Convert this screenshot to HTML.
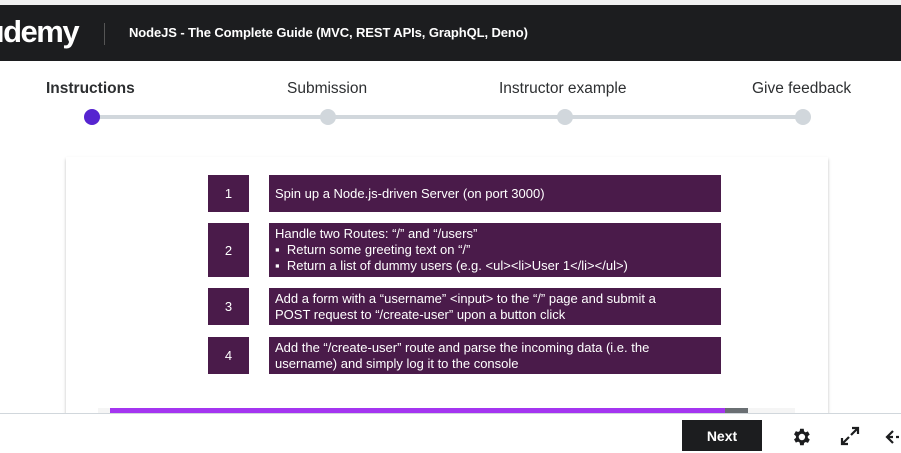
<!DOCTYPE html>
<html><head><meta charset="utf-8"><style>
*{margin:0;padding:0;box-sizing:border-box}
body{width:901px;height:451px;overflow:hidden;background:#fff;font-family:"Liberation Sans",sans-serif;position:relative}
.top{position:absolute;left:0;top:0;width:901px;height:5px;background:#f0f0f0}
.hdr{position:absolute;left:0;top:5px;width:901px;height:56px;background:#1c1d1f;color:#fff}
.logo{position:absolute;left:-4px;top:9px;font-size:31px;font-weight:bold;letter-spacing:-1.5px}
.sep{position:absolute;left:104px;top:18px;width:1px;height:22px;background:#555}
.title{position:absolute;left:129px;top:20px;font-size:13px;font-weight:bold;letter-spacing:-0.1px}
.step{position:absolute;top:80px;font-size:15.5px;color:#2d2f31}
.track{position:absolute;left:92px;top:115px;width:711px;height:4px;background:#d1d7dc}
.dot{position:absolute;top:109px;width:16px;height:16px;border-radius:50%;background:#d1d7dc}
.card{position:absolute;left:66px;top:157px;width:762px;height:260px;background:#fff;box-shadow:0 2px 3px rgba(0,0,0,.25)}
.n{position:absolute;left:208px;width:41px;background:#4a1b4a;color:#fff;font-size:13px;display:flex;align-items:center;justify-content:center}
.t{position:absolute;left:269px;width:452px;background:#4a1b4a;color:#fff;font-size:13px;line-height:16px;padding:0 6px;display:flex;flex-direction:column;justify-content:center}
.bar{position:absolute;top:408px;height:5px}
.bot{position:absolute;left:0;top:413px;width:901px;height:38px;background:#fff;border-top:1px solid #d1d7dc}
.next{position:absolute;left:682px;top:420px;width:80px;height:31px;background:#1c1d1f;color:#fff;font-weight:bold;font-size:14px;text-align:center;line-height:33px}
</style></head><body>
<div class="top"></div>
<div class="hdr"><div class="logo">ıdemy</div><div class="sep"></div><div class="title">NodeJS - The Complete Guide (MVC, REST APIs, GraphQL, Deno)</div></div>
<div class="step" style="left:46px;font-weight:bold">Instructions</div>
<div class="step" style="left:287px">Submission</div>
<div class="step" style="left:499px">Instructor example</div>
<div class="step" style="left:752px">Give feedback</div>
<div class="track"></div>
<div class="dot" style="left:84px;background:#5624d0"></div>
<div class="dot" style="left:320px"></div>
<div class="dot" style="left:557px"></div>
<div class="dot" style="left:795px"></div>
<div class="card"></div>
<div class="n" style="top:175px;height:37px">1</div>
<div class="t" style="top:175px;height:37px">Spin up a Node.js-driven Server (on port 3000)</div>
<div class="n" style="top:223px;height:54px">2</div>
<div class="t" style="top:223px;height:54px"><div>Handle two Routes: “/” and “/users”</div><div>▪&nbsp; Return some greeting text on “/”</div><div>▪&nbsp; Return a list of dummy users (e.g. &lt;ul&gt;&lt;li&gt;User 1&lt;/li&gt;&lt;/ul&gt;)</div></div>
<div class="n" style="top:288px;height:37px">3</div>
<div class="t" style="top:288px;height:37px"><div>Add a form with a “username” &lt;input&gt; to the “/” page and submit a</div><div>POST request to “/create-user” upon a button click</div></div>
<div class="n" style="top:337px;height:37px">4</div>
<div class="t" style="top:337px;height:37px"><div>Add the “/create-user” route and parse the incoming data (i.e. the</div><div>username) and simply log it to the console</div></div>
<div class="bar" style="left:98px;width:697px;background:#f5f5f5"></div>
<div class="bar" style="left:110px;width:615px;background:#a435f0"></div>
<div class="bar" style="left:725px;width:23px;background:#6a6f73"></div>
<div class="bot"></div>
<div class="next">Next</div>
<svg style="position:absolute;left:790px;top:426px" width="22" height="22" viewBox="0 0 24 24"><path fill="#1c1d1f" d="M19.4 13a7.5 7.5 0 000-2l2.1-1.6-2-3.5-2.5 1a7.6 7.6 0 00-1.7-1L15 3h-4l-.4 2.6a7.6 7.6 0 00-1.7 1l-2.5-1-2 3.5L6.5 11a7.5 7.5 0 000 2l-2.1 1.6 2 3.5 2.5-1a7.6 7.6 0 001.7 1L11 21h4l.4-2.6a7.6 7.6 0 001.7-1l2.5 1 2-3.5zM13 15.5a3.5 3.5 0 110-7 3.5 3.5 0 010 7z"/></svg>
<svg style="position:absolute;left:840px;top:426px" width="20" height="20" viewBox="0 0 20 20" fill="none" stroke="#1c1d1f" stroke-width="2.2"><path d="M11 9l7-7M12 2h6v6M9 11l-7 7M2 12v6h6"/></svg>
<svg style="position:absolute;left:885px;top:430px" width="20" height="14" viewBox="0 0 20 14" fill="none" stroke="#1c1d1f" stroke-width="2.2"><path d="M8 1L2 7l6 6M2 7h6M11 7h3"/></svg>
</body></html>
